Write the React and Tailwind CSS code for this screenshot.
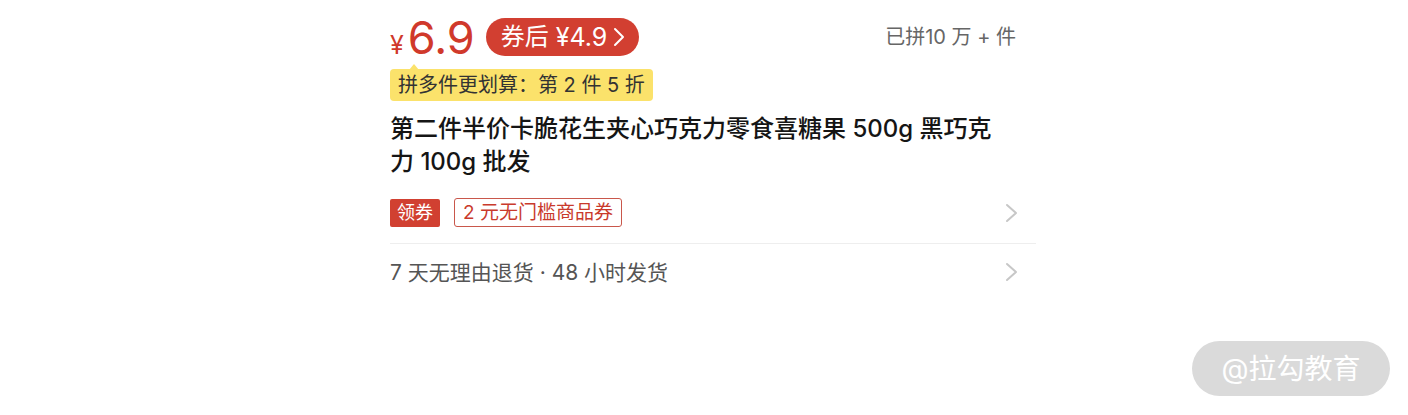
import React from "react";

const FONT = { fontFamily: 'Inter, "Noto Sans CJK SC", sans-serif' };

function Chevron({ className, color = "#c7c7c7", w = 13, h = 20, sw = 2 }) {
  return (
    <svg width={w} height={h} viewBox={`0 0 ${w} ${h}`} className={className}>
      <polyline
        points={`${sw},${sw} ${w - sw},${h / 2} ${sw},${h - sw}`}
        fill="none"
        stroke={color}
        strokeWidth={sw}
        strokeLinecap="round"
        strokeLinejoin="round"
      />
    </svg>
  );
}

export default function App() {
  return (
    <div className="relative w-[1408px] h-[415px] bg-white overflow-hidden" style={FONT}>
      <div className="ml-[390px] w-[646px] pt-[15px]">
        {/* price row */}
        <div className="flex items-center h-[44px]">
          <div className="flex items-baseline text-[#d0392b]">
            <span className="text-[25px] leading-none">¥</span>
            <span className="text-[45px] leading-none ml-[4px]">6.9</span>
          </div>
          <div className="ml-[11px] h-[38px] rounded-full bg-[#d23f31] flex items-center pl-[15px] pr-[14px] text-white">
            <span className="text-[24px] leading-none">券后</span>
            <span className="text-[25px] leading-none ml-[7px]">¥4.9</span>
            <Chevron className="ml-[6px]" color="#ffffff" w={12} h={20} sw={2} />
          </div>
          <div className="ml-auto mr-[20px] text-[20px] text-[#666666] leading-none">
            已拼10 万 + 件
          </div>
        </div>

        {/* promo tag */}
        <div className="relative mt-[10px] inline-flex h-[32px] items-center rounded-[4px] bg-[#fbe26b] px-[8px] text-[20px] text-[#333333] leading-none">
          <span className="absolute left-[19px] -top-[5px] w-0 h-0 border-l-[5px] border-r-[5px] border-b-[6px] border-l-transparent border-r-transparent border-b-[#fbe26b]" />
          拼多件更划算：第 2 件 5 折
        </div>

        {/* title */}
        <div className="mt-[11px] text-[24px] leading-[33px] font-medium text-[#151515]">
          第二件半价卡脆花生夹心巧克力零食喜糖果 500g 黑巧克
          <br />
          力 100g 批发
        </div>

        {/* coupon row */}
        <div className="mt-[20px] flex items-center h-[29px]">
          <span className="h-[28px] px-[7px] flex items-center rounded-[2px] bg-[#d14031] text-white text-[18px] leading-none">
            领券
          </span>
          <span className="ml-[14px] h-[29px] px-[8px] flex items-center rounded-[3px] border border-[#c9574b] text-[#c93a2c] text-[19px] leading-none">
            2 元无门槛商品券
          </span>
          <Chevron className="ml-auto mr-[18px]" />
        </div>

        <div className="mt-[16px] h-px bg-[#eeeeee]" />

        {/* service row */}
        <div className="mt-[14px] flex items-center h-[28px]">
          <span className="text-[21px] text-[#555555] leading-none">7 天无理由退货 · 48 小时发货</span>
          <Chevron className="ml-auto mr-[18px]" />
        </div>
      </div>

      {/* watermark */}
      <div className="absolute left-[1192px] top-[341px] w-[198px] h-[55px] rounded-full bg-[#dadada] flex items-center justify-center text-white text-[28px] leading-none">
        @拉勾教育
      </div>
    </div>
  );
}
